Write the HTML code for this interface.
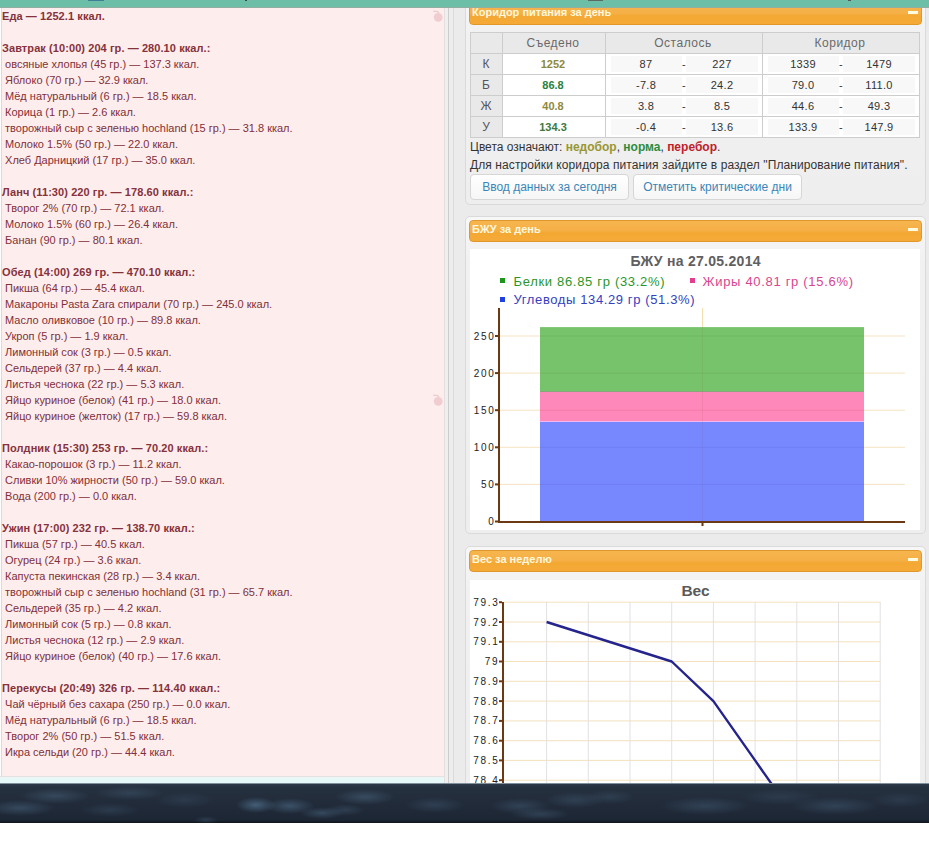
<!DOCTYPE html>
<html><head><meta charset="utf-8">
<style>
*{margin:0;padding:0;box-sizing:border-box}
html,body{width:929px;height:853px;overflow:hidden;background:#fff;font-family:"Liberation Sans",sans-serif}
.abs{position:absolute}
#topbar{left:0;top:0;width:929px;height:8px;background:linear-gradient(#6cbfa6 0,#6cbfa6 7px,#8fb0a0 7px);z-index:5}
#left{left:1px;top:7px;width:443px;height:769px;background:#fdeded;border-left:1px solid #e0d8d8}
#lefttext{position:absolute;left:0px;top:1px;font-size:11px;line-height:16px;color:#80303a;white-space:pre}
#lefttext b{font-weight:bold;color:#86323c;letter-spacing:0.08px}
#gutter{left:444px;top:7px;width:21px;height:776px;background:#ebebeb}
#rightbg{left:465px;top:7px;width:464px;height:776px;background:#ebebeb}
.panel{position:absolute;left:465px;width:461px;background:linear-gradient(#f7f7f7 0,#f1f1f1 45px,#eeeeee 100%);border:1px solid #dadada;border-radius:5px}
.hdr{position:absolute;left:469px;width:453px;height:22px;border:1px solid #e0982c;border-radius:4px;background:linear-gradient(#f7b54e 0%,#f5b047 45%,#f4a834 60%,#f5aa37 100%);color:#fff8dc;font-weight:bold;font-size:11px;line-height:16px;padding-left:2px}
.hdr i{position:absolute;right:3px;top:7px;width:10px;height:3px;background:#fffbe0}
#dark{left:0;top:783px;width:929px;height:40px;z-index:10;background:radial-gradient(35px 8px at 20px 25px, rgba(80,112,140,0.45), rgba(80,112,140,0) 100%),radial-gradient(35px 8px at 55px 13px, rgba(80,112,140,0.40), rgba(80,112,140,0) 100%),radial-gradient(35px 7px at 130px 10px, rgba(80,112,140,0.30), rgba(80,112,140,0) 100%),radial-gradient(30px 7px at 110px 27px, rgba(80,112,140,0.25), rgba(80,112,140,0) 100%),radial-gradient(30px 8px at 185px 17px, rgba(80,112,140,0.20), rgba(80,112,140,0) 100%),radial-gradient(12px 4px at 206px 37px, rgba(80,112,140,0.30), rgba(80,112,140,0) 100%),radial-gradient(20px 8px at 256px 22px, rgba(80,112,140,0.75), rgba(80,112,140,0) 100%),radial-gradient(25px 8px at 290px 23px, rgba(80,112,140,0.55), rgba(80,112,140,0) 100%),radial-gradient(22px 6px at 322px 30px, rgba(80,112,140,0.45), rgba(80,112,140,0) 100%),radial-gradient(30px 8px at 365px 14px, rgba(80,112,140,0.45), rgba(80,112,140,0) 100%),radial-gradient(20px 6px at 345px 27px, rgba(80,112,140,0.30), rgba(80,112,140,0) 100%),radial-gradient(30px 8px at 435px 22px, rgba(80,112,140,0.30), rgba(80,112,140,0) 100%),radial-gradient(30px 8px at 520px 23px, rgba(80,112,140,0.35), rgba(80,112,140,0) 100%),radial-gradient(30px 6px at 540px 31px, rgba(80,112,140,0.35), rgba(80,112,140,0) 100%),radial-gradient(30px 8px at 575px 17px, rgba(80,112,140,0.30), rgba(80,112,140,0) 100%),radial-gradient(25px 7px at 610px 14px, rgba(80,112,140,0.25), rgba(80,112,140,0) 100%),radial-gradient(45px 9px at 705px 23px, rgba(80,112,140,0.35), rgba(80,112,140,0) 100%),radial-gradient(40px 8px at 780px 14px, rgba(80,112,140,0.20), rgba(80,112,140,0) 100%),radial-gradient(45px 9px at 835px 23px, rgba(80,112,140,0.35), rgba(80,112,140,0) 100%),radial-gradient(30px 8px at 900px 17px, rgba(80,112,140,0.20), rgba(80,112,140,0) 100%), linear-gradient(#7f8f9c 0px,#7f8f9c 1px,#2c3848 1px,#26313f 4px,#212b3a 20px,#1d2634 37px,#0f141d 40px)}
.ct{width:120px;text-align:center;line-height:16px;white-space:nowrap}
.btn{border:1px solid #d6d6d6;border-radius:4px;background:linear-gradient(#fff,#f6f6f6);color:#3a86b8;font-size:12px;line-height:24px;text-align:center;white-space:nowrap}
</style></head><body>
<div id="topbar" class="abs"></div>
<div class="abs" style="left:88px;top:0;width:16px;height:1px;background:#3d7f99;z-index:6"></div>
<div class="abs" style="left:245px;top:0;width:2px;height:1px;background:#444;z-index:6"></div>
<div class="abs" style="left:588px;top:0;width:15px;height:1px;background:#5a6a60;z-index:6"></div>
<div class="abs" style="left:848px;top:0;width:3px;height:1px;background:#555;z-index:6"></div>
<div id="left" class="abs">
<div id="lefttext"><b>Еда — 1252.1 ккал.</b>

<b>Завтрак (10:00) 204 гр. — 280.10 ккал.:</b>
 овсяные хлопья (45 гр.) — 137.3 ккал.
 Яблоко (70 гр.) — 32.9 ккал.
 Мёд натуральный (6 гр.) — 18.5 ккал.
 Корица (1 гр.) — 2.6 ккал.
 творожный сыр с зеленью hochland (15 гр.) — 31.8 ккал.
 Молоко 1.5% (50 гр.) — 22.0 ккал.
 Хлеб Дарницкий (17 гр.) — 35.0 ккал.

<b>Ланч (11:30) 220 гр. — 178.60 ккал.:</b>
 Творог 2% (70 гр.) — 72.1 ккал.
 Молоко 1.5% (60 гр.) — 26.4 ккал.
 Банан (90 гр.) — 80.1 ккал.

<b>Обед (14:00) 269 гр. — 470.10 ккал.:</b>
 Пикша (64 гр.) — 45.4 ккал.
 Макароны Pasta Zara спирали (70 гр.) — 245.0 ккал.
 Масло оливковое (10 гр.) — 89.8 ккал.
 Укроп (5 гр.) — 1.9 ккал.
 Лимонный сок (3 гр.) — 0.5 ккал.
 Сельдерей (37 гр.) — 4.4 ккал.
 Листья чеснока (22 гр.) — 5.3 ккал.
 Яйцо куриное (белок) (41 гр.) — 18.0 ккал.
 Яйцо куриное (желток) (17 гр.) — 59.8 ккал.

<b>Полдник (15:30) 253 гр. — 70.20 ккал.:</b>
 Какао-порошок (3 гр.) — 11.2 ккал.
 Сливки 10% жирности (50 гр.) — 59.0 ккал.
 Вода (200 гр.) — 0.0 ккал.

<b>Ужин (17:00) 232 гр. — 138.70 ккал.:</b>
 Пикша (57 гр.) — 40.5 ккал.
 Огурец (24 гр.) — 3.6 ккал.
 Капуста пекинская (28 гр.) — 3.4 ккал.
 творожный сыр с зеленью hochland (31 гр.) — 65.7 ккал.
 Сельдерей (35 гр.) — 4.2 ккал.
 Лимонный сок (5 гр.) — 0.8 ккал.
 Листья чеснока (12 гр.) — 2.9 ккал.
 Яйцо куриное (белок) (40 гр.) — 17.6 ккал.

<b>Перекусы (20:49) 326 гр. — 114.40 ккал.:</b>
 Чай чёрный без сахара (250 гр.) — 0.0 ккал.
 Мёд натуральный (6 гр.) — 18.5 ккал.
 Творог 2% (50 гр.) — 51.5 ккал.
 Икра сельди (20 гр.) — 44.4 ккал.</div>
</div>
<div class="abs" style="left:0;top:776px;width:444px;height:1px;background:#e2e2e2"></div><div class="abs" style="left:0;top:777px;width:444px;height:1px;background:#eef4f4"></div>
<div class="abs" style="left:0;top:778px;width:444px;height:5px;background:#e6f8f8"></div>
<svg class="abs" style="left:430px;top:10px" width="14" height="14" viewBox="0 0 14 14"><path d="M3.2 1.2 L7.8 1.6 L9 3.5" fill="none" stroke="#eecace" stroke-width="1.3"/><circle cx="8.2" cy="7.3" r="4.4" fill="#f1ccd0"/></svg>
<svg class="abs" style="left:430px;top:394px" width="14" height="14" viewBox="0 0 14 14"><path d="M3.2 1.2 L7.8 1.6 L9 3.5" fill="none" stroke="#eecace" stroke-width="1.3"/><circle cx="8.2" cy="7.3" r="4.4" fill="#f1ccd0"/></svg>
<div id="gutter" class="abs"></div>
<div class="abs" style="left:444px;top:7px;width:4px;height:776px;background:#efefef"></div><div class="abs" style="left:444px;top:7px;width:1px;height:776px;background:#e6dfdf"></div>
<div class="abs" style="left:448px;top:7px;width:1px;height:776px;background:#cccccc"></div>
<div class="abs" style="left:449px;top:7px;width:4px;height:776px;background:#ededed"></div>
<div class="abs" style="left:453px;top:7px;width:1px;height:776px;background:#dadada"></div>
<div id="rightbg" class="abs"></div>

<div class="panel" style="top:-10px;height:215px"></div>
<div class="hdr" style="top:3px;height:22px">Коридор питания за день<i></i></div>


<div class="abs" style="left:470px;top:32px;width:450px;height:106px;background:#fff"></div>
<div class="abs" style="left:470px;top:32px;width:450px;height:22px;background:#e9e9e9"></div>
<div class="abs" style="left:470px;top:32px;width:33px;height:106px;background:#e9e9e9"></div>
<div class="abs" style="left:611px;top:56px;width:71px;height:16px;background:#f8f8f8"></div>
<div class="abs" style="left:686px;top:56px;width:72px;height:16px;background:#f8f8f8"></div>
<div class="abs" style="left:768px;top:56px;width:71px;height:16px;background:#f8f8f8"></div>
<div class="abs" style="left:843px;top:56px;width:72px;height:16px;background:#f8f8f8"></div>
<div class="abs" style="left:611px;top:77px;width:71px;height:16px;background:#f8f8f8"></div>
<div class="abs" style="left:686px;top:77px;width:72px;height:16px;background:#f8f8f8"></div>
<div class="abs" style="left:768px;top:77px;width:71px;height:16px;background:#f8f8f8"></div>
<div class="abs" style="left:843px;top:77px;width:72px;height:16px;background:#f8f8f8"></div>
<div class="abs" style="left:611px;top:98px;width:71px;height:16px;background:#f8f8f8"></div>
<div class="abs" style="left:686px;top:98px;width:72px;height:16px;background:#f8f8f8"></div>
<div class="abs" style="left:768px;top:98px;width:71px;height:16px;background:#f8f8f8"></div>
<div class="abs" style="left:843px;top:98px;width:72px;height:16px;background:#f8f8f8"></div>
<div class="abs" style="left:611px;top:119px;width:71px;height:16px;background:#f8f8f8"></div>
<div class="abs" style="left:686px;top:119px;width:72px;height:16px;background:#f8f8f8"></div>
<div class="abs" style="left:768px;top:119px;width:71px;height:16px;background:#f8f8f8"></div>
<div class="abs" style="left:843px;top:119px;width:72px;height:16px;background:#f8f8f8"></div>
<div class="abs" style="left:470px;top:32px;width:450px;height:1px;background:#cdcdcd"></div>
<div class="abs" style="left:470px;top:53px;width:450px;height:1px;background:#cdcdcd"></div>
<div class="abs" style="left:470px;top:74px;width:450px;height:1px;background:#cdcdcd"></div>
<div class="abs" style="left:470px;top:95px;width:450px;height:1px;background:#cdcdcd"></div>
<div class="abs" style="left:470px;top:116px;width:450px;height:1px;background:#cdcdcd"></div>
<div class="abs" style="left:470px;top:137px;width:450px;height:1px;background:#cdcdcd"></div>
<div class="abs" style="left:470px;top:32px;width:1px;height:106px;background:#cdcdcd"></div>
<div class="abs" style="left:502px;top:32px;width:1px;height:106px;background:#cdcdcd"></div>
<div class="abs" style="left:605px;top:32px;width:1px;height:106px;background:#cdcdcd"></div>
<div class="abs" style="left:762px;top:32px;width:1px;height:106px;background:#cdcdcd"></div>
<div class="abs" style="left:919px;top:32px;width:1px;height:106px;background:#cdcdcd"></div>
<div class="abs ct" style="left:493px;top:35px;color:#6a6a6a;font-size:12px;letter-spacing:0.5px">Съедено</div>
<div class="abs ct" style="left:623px;top:35px;color:#6a6a6a;font-size:12px;letter-spacing:0.5px">Осталось</div>
<div class="abs ct" style="left:780px;top:35px;color:#6a6a6a;font-size:12px;letter-spacing:0.5px">Коридор</div>
<div class="abs ct" style="left:426px;top:56px;color:#555560;font-size:12px">К</div>
<div class="abs ct" style="left:493px;top:56px;color:#8f8a3a;font-size:11px;font-weight:bold">1252</div>
<div class="abs ct" style="left:586px;top:56px;color:#333;font-size:11px;letter-spacing:0.3px">87</div>
<div class="abs ct" style="left:624px;top:56px;color:#333;font-size:11px;letter-spacing:0.3px">-</div>
<div class="abs ct" style="left:662px;top:56px;color:#333;font-size:11px;letter-spacing:0.3px">227</div>
<div class="abs ct" style="left:743px;top:56px;color:#333;font-size:11px;letter-spacing:0.3px">1339</div>
<div class="abs ct" style="left:781px;top:56px;color:#333;font-size:11px;letter-spacing:0.3px">-</div>
<div class="abs ct" style="left:819px;top:56px;color:#333;font-size:11px;letter-spacing:0.3px">1479</div>
<div class="abs ct" style="left:426px;top:77px;color:#555560;font-size:12px">Б</div>
<div class="abs ct" style="left:493px;top:77px;color:#2a8040;font-size:11px;font-weight:bold">86.8</div>
<div class="abs ct" style="left:586px;top:77px;color:#333;font-size:11px;letter-spacing:0.3px">-7.8</div>
<div class="abs ct" style="left:624px;top:77px;color:#333;font-size:11px;letter-spacing:0.3px">-</div>
<div class="abs ct" style="left:662px;top:77px;color:#333;font-size:11px;letter-spacing:0.3px">24.2</div>
<div class="abs ct" style="left:743px;top:77px;color:#333;font-size:11px;letter-spacing:0.3px">79.0</div>
<div class="abs ct" style="left:781px;top:77px;color:#333;font-size:11px;letter-spacing:0.3px">-</div>
<div class="abs ct" style="left:819px;top:77px;color:#333;font-size:11px;letter-spacing:0.3px">111.0</div>
<div class="abs ct" style="left:426px;top:98px;color:#555560;font-size:12px">Ж</div>
<div class="abs ct" style="left:493px;top:98px;color:#8f8a3a;font-size:11px;font-weight:bold">40.8</div>
<div class="abs ct" style="left:586px;top:98px;color:#333;font-size:11px;letter-spacing:0.3px">3.8</div>
<div class="abs ct" style="left:624px;top:98px;color:#333;font-size:11px;letter-spacing:0.3px">-</div>
<div class="abs ct" style="left:662px;top:98px;color:#333;font-size:11px;letter-spacing:0.3px">8.5</div>
<div class="abs ct" style="left:743px;top:98px;color:#333;font-size:11px;letter-spacing:0.3px">44.6</div>
<div class="abs ct" style="left:781px;top:98px;color:#333;font-size:11px;letter-spacing:0.3px">-</div>
<div class="abs ct" style="left:819px;top:98px;color:#333;font-size:11px;letter-spacing:0.3px">49.3</div>
<div class="abs ct" style="left:426px;top:119px;color:#555560;font-size:12px">У</div>
<div class="abs ct" style="left:493px;top:119px;color:#3a7a40;font-size:11px;font-weight:bold">134.3</div>
<div class="abs ct" style="left:586px;top:119px;color:#333;font-size:11px;letter-spacing:0.3px">-0.4</div>
<div class="abs ct" style="left:624px;top:119px;color:#333;font-size:11px;letter-spacing:0.3px">-</div>
<div class="abs ct" style="left:662px;top:119px;color:#333;font-size:11px;letter-spacing:0.3px">13.6</div>
<div class="abs ct" style="left:743px;top:119px;color:#333;font-size:11px;letter-spacing:0.3px">133.9</div>
<div class="abs ct" style="left:781px;top:119px;color:#333;font-size:11px;letter-spacing:0.3px">-</div>
<div class="abs ct" style="left:819px;top:119px;color:#333;font-size:11px;letter-spacing:0.3px">147.9</div>

<div class="abs" style="left:470px;top:138px;font-size:12px;line-height:18px;color:#333;white-space:nowrap">Цвета означают: <b style="color:#9a9632">недобор</b>, <b style="color:#2e8b3e">норма</b>, <b style="color:#c0202a">перебор</b>.<br><span style="letter-spacing:0.09px">Для настройки коридора питания зайдите в раздел "Планирование питания".</span></div>
<div class="abs btn" style="left:470px;top:174px;width:159px;height:26px">Ввод данных за сегодня</div>
<div class="abs btn" style="left:633px;top:174px;width:169px;height:26px">Отметить критические дни</div>

<div class="panel" style="top:216px;height:318px"></div>
<div class="hdr" style="top:220px">БЖУ за день<i></i></div>

<div class="panel" style="top:546px;height:250px"></div>
<div class="hdr" style="top:550px">Вес за неделю<i></i></div>

<svg class="abs" style="left:0;top:0" width="929" height="783" viewBox="0 0 929 783">
<rect x="470" y="249" width="450" height="281" fill="#fff"/>
<text x="695.5" y="266" text-anchor="middle" font-family="Liberation Sans" font-weight="bold" font-size="14" fill="#606060" textLength="130" lengthAdjust="spacing">БЖУ на 27.05.2014</text>
<rect x="500" y="278" width="5" height="5" fill="#1e961e"/>
<text x="513.5" y="286" font-family="Liberation Sans" font-size="13" fill="#2a962a" textLength="151" lengthAdjust="spacing">Белки 86.85 гр (33.2%)</text>
<rect x="690" y="278" width="5" height="5" fill="#e23d8e"/>
<text x="702.5" y="286" font-family="Liberation Sans" font-size="13" fill="#d8468f" textLength="150.5" lengthAdjust="spacing">Жиры 40.81 гр (15.6%)</text>
<rect x="500" y="297" width="5" height="5" fill="#2040e0"/>
<text x="513.5" y="304" font-family="Liberation Sans" font-size="13" fill="#3540c0" textLength="181" lengthAdjust="spacing">Углеводы 134.29 гр (51.3%)</text>
<rect x="500" y="483.9" width="405" height="1" fill="#f5e3c2"/>
<rect x="500" y="446.8" width="405" height="1" fill="#f5e3c2"/>
<rect x="500" y="409.7" width="405" height="1" fill="#f5e3c2"/>
<rect x="500" y="372.6" width="405" height="1" fill="#f5e3c2"/>
<rect x="500" y="335.5" width="405" height="1" fill="#f5e3c2"/>
<rect x="702" y="308" width="1" height="213" fill="#f3dfae"/>
<rect x="540" y="327.1" width="324" height="64.4" fill="#77c36b"/>
<rect x="540" y="391" width="324" height="1" fill="#86a87a"/>
<rect x="540" y="392" width="324" height="29" fill="#ff88ba"/>
<rect x="540" y="421" width="324" height="1" fill="#f4b6f0"/>
<rect x="540" y="422" width="324" height="99.5" fill="#7788ff"/>
<rect x="540" y="483.9" width="324" height="1" fill="rgba(60,40,120,0.10)"/>
<rect x="540" y="446.8" width="324" height="1" fill="rgba(60,40,120,0.10)"/>
<rect x="540" y="409.7" width="324" height="1" fill="rgba(160,40,60,0.12)"/>
<rect x="540" y="372.6" width="324" height="1" fill="rgba(60,80,20,0.10)"/>
<rect x="540" y="335.5" width="324" height="1" fill="rgba(60,80,20,0.10)"/>
<rect x="702" y="327.1" width="1" height="194" fill="rgba(100,80,40,0.08)"/>
<rect x="498" y="308" width="2" height="215" fill="#6b3a14"/>
<rect x="498" y="521" width="407" height="2" fill="#6b3a14"/>
<rect x="701.5" y="522" width="2" height="4" fill="#6b3a14"/>
<rect x="495" y="520.5" width="3" height="2" fill="#6b3a14"/>
<text x="495.5" y="525.0" text-anchor="end" font-family="Liberation Sans" font-size="10" letter-spacing="1.7" fill="#222">0</text>
<rect x="495" y="483.4" width="3" height="2" fill="#6b3a14"/>
<text x="495.5" y="487.9" text-anchor="end" font-family="Liberation Sans" font-size="10" letter-spacing="1.7" fill="#222">50</text>
<rect x="495" y="446.3" width="3" height="2" fill="#6b3a14"/>
<text x="495.5" y="450.8" text-anchor="end" font-family="Liberation Sans" font-size="10" letter-spacing="1.7" fill="#222">100</text>
<rect x="495" y="409.2" width="3" height="2" fill="#6b3a14"/>
<text x="495.5" y="413.7" text-anchor="end" font-family="Liberation Sans" font-size="10" letter-spacing="1.7" fill="#222">150</text>
<rect x="495" y="372.1" width="3" height="2" fill="#6b3a14"/>
<text x="495.5" y="376.6" text-anchor="end" font-family="Liberation Sans" font-size="10" letter-spacing="1.7" fill="#222">200</text>
<rect x="495" y="335.0" width="3" height="2" fill="#6b3a14"/>
<text x="495.5" y="339.5" text-anchor="end" font-family="Liberation Sans" font-size="10" letter-spacing="1.7" fill="#222">250</text>
<rect x="470" y="580" width="450" height="203" fill="#fff"/>
<text x="695.5" y="596" text-anchor="middle" font-family="Liberation Sans" font-weight="bold" font-size="15.5" fill="#5a5a5a">Вес</text>
<rect x="504" y="601.7" width="376.5" height="1" fill="#f3e2bd"/>
<rect x="504" y="621.5" width="376.5" height="1" fill="#f3e2bd"/>
<rect x="504" y="641.3" width="376.5" height="1" fill="#f3e2bd"/>
<rect x="504" y="661.0" width="376.5" height="1" fill="#f3e2bd"/>
<rect x="504" y="680.8" width="376.5" height="1" fill="#f3e2bd"/>
<rect x="504" y="700.6" width="376.5" height="1" fill="#f3e2bd"/>
<rect x="504" y="720.4" width="376.5" height="1" fill="#f3e2bd"/>
<rect x="504" y="740.2" width="376.5" height="1" fill="#f3e2bd"/>
<rect x="504" y="759.9" width="376.5" height="1" fill="#f3e2bd"/>
<rect x="504" y="779.7" width="376.5" height="1" fill="#f3e2bd"/>
<rect x="546.1" y="602" width="1" height="181" fill="#e2e0e4"/>
<rect x="587.8" y="602" width="1" height="181" fill="#e2e0e4"/>
<rect x="629.5" y="602" width="1" height="181" fill="#e2e0e4"/>
<rect x="671.2" y="602" width="1" height="181" fill="#e2e0e4"/>
<rect x="712.9" y="602" width="1" height="181" fill="#e2e0e4"/>
<rect x="754.6" y="602" width="1" height="181" fill="#e2e0e4"/>
<rect x="796.3" y="602" width="1" height="181" fill="#e2e0e4"/>
<rect x="838.0" y="602" width="1" height="181" fill="#e2e0e4"/>
<rect x="879.7" y="602" width="1" height="181" fill="#e2e0e4"/>
<rect x="502" y="602" width="2" height="181" fill="#6b3a14"/>
<rect x="499" y="601.2" width="3" height="2" fill="#6b3a14"/>
<text x="499.4" y="605.7" text-anchor="end" font-family="Liberation Sans" font-size="10" letter-spacing="1.7" fill="#222">79.3</text>
<rect x="499" y="621.0" width="3" height="2" fill="#6b3a14"/>
<text x="499.4" y="625.5" text-anchor="end" font-family="Liberation Sans" font-size="10" letter-spacing="1.7" fill="#222">79.2</text>
<rect x="499" y="640.8" width="3" height="2" fill="#6b3a14"/>
<text x="499.4" y="645.3" text-anchor="end" font-family="Liberation Sans" font-size="10" letter-spacing="1.7" fill="#222">79.1</text>
<rect x="499" y="660.5" width="3" height="2" fill="#6b3a14"/>
<text x="499.4" y="665.0" text-anchor="end" font-family="Liberation Sans" font-size="10" letter-spacing="1.7" fill="#222">79</text>
<rect x="499" y="680.3" width="3" height="2" fill="#6b3a14"/>
<text x="499.4" y="684.8" text-anchor="end" font-family="Liberation Sans" font-size="10" letter-spacing="1.7" fill="#222">78.9</text>
<rect x="499" y="700.1" width="3" height="2" fill="#6b3a14"/>
<text x="499.4" y="704.6" text-anchor="end" font-family="Liberation Sans" font-size="10" letter-spacing="1.7" fill="#222">78.8</text>
<rect x="499" y="719.9" width="3" height="2" fill="#6b3a14"/>
<text x="499.4" y="724.4" text-anchor="end" font-family="Liberation Sans" font-size="10" letter-spacing="1.7" fill="#222">78.7</text>
<rect x="499" y="739.7" width="3" height="2" fill="#6b3a14"/>
<text x="499.4" y="744.2" text-anchor="end" font-family="Liberation Sans" font-size="10" letter-spacing="1.7" fill="#222">78.6</text>
<rect x="499" y="759.4" width="3" height="2" fill="#6b3a14"/>
<text x="499.4" y="763.9" text-anchor="end" font-family="Liberation Sans" font-size="10" letter-spacing="1.7" fill="#222">78.5</text>
<rect x="499" y="779.2" width="3" height="2" fill="#6b3a14"/>
<text x="499.4" y="783.7" text-anchor="end" font-family="Liberation Sans" font-size="10" letter-spacing="1.7" fill="#222">78.4</text>
<polyline points="546.6,622.0 671.7,661.5 713.4,701.1 755.1,760.4 796.8,819.8" fill="none" stroke="#24248c" stroke-width="2.4" stroke-linejoin="round"/>
</svg>
<div id="dark" class="abs"></div>
</body></html>
